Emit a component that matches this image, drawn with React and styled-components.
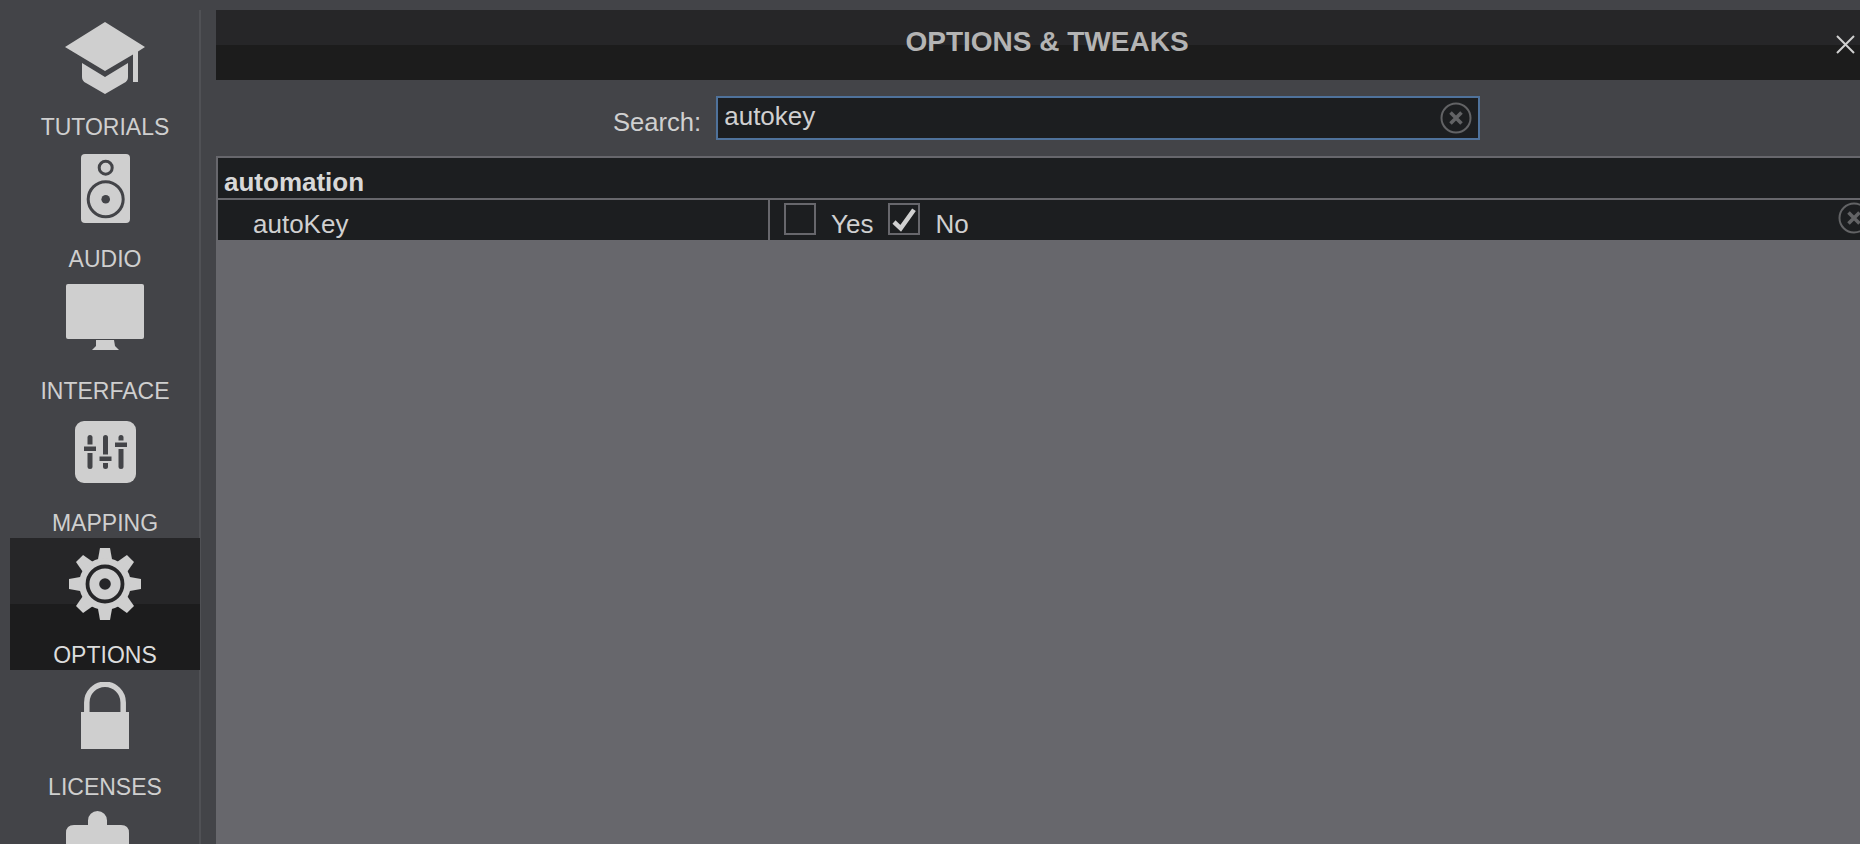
import React from "react";
import styled, { createGlobalStyle } from "styled-components";

const Global = createGlobalStyle`
  html, body {
    margin: 0;
    padding: 0;
    height: 100%;
    overflow: hidden;
    background: #434448;
  }
  #root {
    height: 100%;
  }
`;

const Page = styled.div`
  display: flex;
  width: 1860px;
  height: 844px;
  overflow: hidden;
  background: #434448;
  font-family: "Liberation Sans", Arial, sans-serif;
  color: #d0d0d0;
`;

const Sidebar = styled.nav`
  box-sizing: border-box;
  width: 216px;
  height: 844px;
  flex: none;
  padding: 10px 15px 0 10px;
  overflow: hidden;
`;

const NavList = styled.div`
  box-sizing: border-box;
  height: 100%;
  display: flex;
  flex-direction: column;
  border-right: 2px solid #505155;
`;

const NavItem = styled.div`
  box-sizing: border-box;
  height: 132px;
  flex: none;
  margin-right: -1px;
  display: flex;
  flex-direction: column;
  align-items: center;
  justify-content: space-between;
  padding-bottom: 2px;
  font-size: 23px;
  line-height: 26px;
  color: ${(p) => (p.$active ? "#dcdcdc" : "#cfcfcf")};
  background: ${(p) =>
    p.$active
      ? "linear-gradient(#262628 0, #262628 50%, #1c1c1d 50%, #1c1c1d 100%)"
      : "transparent"};
`;

const IconSlot = styled.div`
  height: 96px;
  flex: none;
  display: flex;
  align-items: flex-start;
  justify-content: center;
`;

const Glyph = styled.svg`
  display: block;
  margin-top: ${(p) => p.$top}px;
  margin-left: ${(p) => p.$left || 0}px;
`;

const Main = styled.main`
  flex: 1;
  min-width: 0;
  display: flex;
  flex-direction: column;
  padding-top: 10px;
`;

const TitleBar = styled.header`
  position: relative;
  height: 70px;
  flex: none;
  display: flex;
  justify-content: center;
  padding: 16px 0 0 18px;
  box-sizing: border-box;
  background: linear-gradient(#262628 0, #262628 50%, #1c1c1c 50%, #1c1c1c 100%);
`;

const Title = styled.h1`
  margin: 0;
  font-size: 28px;
  line-height: 32px;
  font-weight: 700;
  color: #b4b4b4;
`;

const CloseButton = styled.button`
  position: absolute;
  right: 5px;
  top: 25px;
  width: 19px;
  height: 19px;
  padding: 0;
  border: none;
  background: none;
`;

const SearchRow = styled.div`
  height: 76px;
  flex: none;
  display: flex;
  align-items: flex-start;
  padding: 16px 0 0 397px;
  box-sizing: border-box;
`;

const SearchLabel = styled.label`
  font-size: 25.6px;
  line-height: 30px;
  margin: 11px 15px 0 0;
  color: #d0d0d0;
`;

const SearchBox = styled.div`
  position: relative;
  box-sizing: border-box;
  width: 764px;
  height: 44px;
  border: 2px solid #4f729b;
  background: #1c1e20;
  padding: 2px 0 0 6px;
  font-size: 26px;
  line-height: 32px;
  color: #d0d0d0;
`;

const ClearIcon = styled.svg`
  position: absolute;
  display: block;
  right: ${(p) => p.$right}px;
  top: ${(p) => p.$top}px;
`;

const Table = styled.section`
  border-top: 2px solid #67676c;
  border-left: 2px solid #67676c;
  background: #1c1e20;
`;

const GroupRow = styled.div`
  height: 40px;
  box-sizing: border-box;
  padding: 9px 0 0 6px;
  font-size: 26px;
  line-height: 30px;
  font-weight: 700;
  color: #d8d8d8;
`;

const OptionRow = styled.div`
  position: relative;
  height: 42px;
  box-sizing: border-box;
  border-top: 2px solid #67676c;
  display: flex;
`;

const OptionName = styled.div`
  box-sizing: border-box;
  width: 552px;
  flex: none;
  padding: 9px 0 0 35px;
  font-size: 26px;
  line-height: 30px;
  border-right: 2px solid #67676c;
`;

const OptionValues = styled.div`
  flex: 1;
  display: flex;
  align-items: flex-start;
  padding: 3px 0 0 14px;
`;

const Check = styled.span`
  box-sizing: border-box;
  display: block;
  width: 32px;
  height: 32px;
  flex: none;
  position: relative;
  border: 2px solid #67676c;
`;

const CheckMark = styled.svg`
  position: absolute;
  left: -2px;
  top: -2px;
`;

const ValueLabel = styled.span`
  font-size: 26px;
  line-height: 30px;
  margin: 6px 15px 0 15px;
`;

const Content = styled.div`
  flex: 1;
  background: #67676c;
`;

const FG = "#cfcfcf";
const BG = "#434448";

const Cap = () => (
  <Glyph $top={12} width="80" height="72" viewBox="65 22 80 72">
    <path fill={FG} d="M105 22 145 47 138 51.5V82H133V54.5L105 71 65 47Z" />
    <path fill={FG} d="M82 63 105 77 128 63V77Q128 81 124 83L105 94 86 83Q82 81 82 77Z" />
  </Glyph>
);

const Speaker = () => (
  <Glyph $top={12} width="49" height="69" viewBox="81 154 49 69">
    <rect x="81" y="154" width="49" height="69" rx="4" fill={FG} />
    <circle cx="105.7" cy="167.7" r="6.5" fill="none" stroke={BG} strokeWidth="3" />
    <circle cx="105.7" cy="199.3" r="17.5" fill="none" stroke={BG} strokeWidth="3" />
    <circle cx="105.7" cy="199.3" r="4.3" fill={BG} />
  </Glyph>
);

const Monitor = () => (
  <Glyph $top={10} width="78" height="66" viewBox="66 284 78 66">
    <rect x="66" y="284" width="78" height="55" rx="2" fill={FG} />
    <path fill={FG} d="M96 340H114L115 346 119 350H92L96 346Z" />
  </Glyph>
);

const Sliders = () => (
  <Glyph $top={15} $left={1} width="61" height="62" viewBox="76 421 61 62">
    <rect x="76" y="421" width="61" height="62" rx="9" fill={FG} />
    <g fill={BG}>
      <rect x="88.5" y="435" width="5" height="34" rx="2.5" />
      <rect x="104" y="435" width="5" height="34" rx="2.5" />
      <rect x="119.5" y="435" width="5" height="34" rx="2.5" />
    </g>
    <g fill={BG} stroke={FG} strokeWidth="2">
      <rect x="84" y="445.5" width="14" height="6.5" />
      <rect x="99.5" y="455.5" width="14" height="6.5" />
      <rect x="115" y="441.5" width="14" height="6.5" />
    </g>
  </Glyph>
);

const Gear = () => (
  <Glyph $top={10} width="72" height="72" viewBox="-36 -36 72 72">
    <g fill={FG}>
      {[0, 45, 90, 135, 180, 225, 270, 315].map((a) => (
        <path key={a} d="M-5 -36H5L7.5 -22H-7.5Z" transform={`rotate(${a})`} />
      ))}
      <circle r="26" />
    </g>
    <circle r="17.5" fill="none" stroke="#262628" strokeWidth="3.8" />
    <circle r="5.8" fill="#262628" />
  </Glyph>
);

const Lock = () => (
  <Glyph $top={12} width="48" height="67" viewBox="81 682 48 67">
    <path d="M86.8 713V702.5a18.2 18.2 0 0 1 36.4 0V713" fill="none" stroke={FG} strokeWidth="5.5" />
    <rect x="81" y="712" width="48" height="37" fill={FG} />
  </Glyph>
);

const Puzzle = () => (
  <Glyph $top={9} $left={-15} width="63" height="33" viewBox="66 811 63 33">
    <path fill={FG} d="M88 825V820.5a9.5 9.5 0 0 1 19 0V825H121Q129 825 129 833V844H66V833Q66 825 74 825Z" />
  </Glyph>
);

const NAV = [
  { label: "TUTORIALS", icon: <Cap /> },
  { label: "AUDIO", icon: <Speaker /> },
  { label: "INTERFACE", icon: <Monitor /> },
  { label: "MAPPING", icon: <Sliders /> },
  { label: "OPTIONS", icon: <Gear />, active: true },
  { label: "LICENSES", icon: <Lock /> },
  { label: "", icon: <Puzzle /> },
];

const Clear = ({ right, top }) => (
  <ClearIcon $right={right} $top={top} width="32" height="32" viewBox="0 0 32 32">
    <circle cx="16" cy="16" r="14.5" fill="none" stroke="#626365" strokeWidth="2" />
    <path d="M10.5 10.5 21.5 21.5M21.5 10.5 10.5 21.5" stroke="#626365" strokeWidth="3.6" />
  </ClearIcon>
);

export default function App() {
  return (
    <Page>
      <Global />
      <Sidebar>
        <NavList>
          {NAV.map((item, i) => (
            <NavItem key={i} $active={item.active}>
              <IconSlot>{item.icon}</IconSlot>
              {item.label && <span>{item.label}</span>}
            </NavItem>
          ))}
        </NavList>
      </Sidebar>
      <Main>
        <TitleBar>
          <Title>OPTIONS &amp; TWEAKS</Title>
          <CloseButton aria-label="close">
            <svg width="19" height="19" viewBox="0 0 19 19">
              <path d="M1 1 18 18M18 1 1 18" stroke="#d0d0d0" strokeWidth="2" />
            </svg>
          </CloseButton>
        </TitleBar>
        <SearchRow>
          <SearchLabel>Search:</SearchLabel>
          <SearchBox>
            autokey
            <Clear right={6} top={4} />
          </SearchBox>
        </SearchRow>
        <Table>
          <GroupRow>automation</GroupRow>
          <OptionRow>
            <OptionName>autoKey</OptionName>
            <OptionValues>
              <Check />
              <ValueLabel>Yes</ValueLabel>
              <Check>
                <CheckMark width="32" height="32" viewBox="0 0 32 32">
                  <path d="M6 19 12.7 25.3 26 6.7" fill="none" stroke="#d0d0d0" strokeWidth="4.5" />
                </CheckMark>
              </Check>
              <ValueLabel>No</ValueLabel>
            </OptionValues>
            <Clear right={-10} top={2} />
          </OptionRow>
        </Table>
        <Content />
      </Main>
    </Page>
  );
}
